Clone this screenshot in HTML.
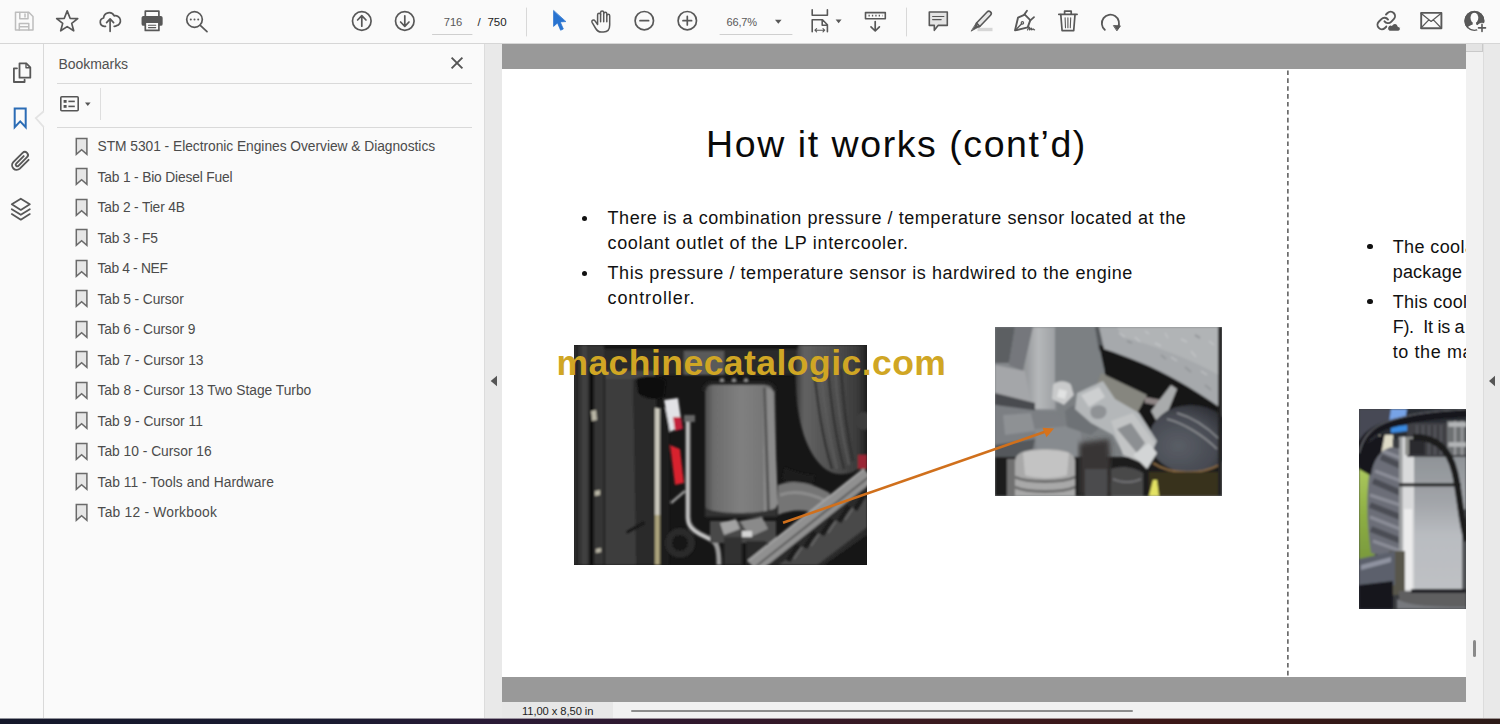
<!DOCTYPE html>
<html lang="en">
<head>
<meta charset="utf-8">
<title>STM 5301 - Electronic Engines Overview &amp; Diagnostics</title>
<style>
html,body{margin:0;padding:0;}
body{width:1500px;height:724px;overflow:hidden;position:relative;background:#fafafa;font-family:"Liberation Sans",sans-serif;color:#4b4b4b;}
.abs{position:absolute;}
#toolbar{left:0;top:0;width:1500px;height:43px;background:#fafafa;border-bottom:1px solid #d6d6d6;}
#leftstrip{left:0;top:44px;width:43px;height:674px;background:#fafafa;border-right:1px solid #d9d9d9;}
#panel{left:44px;top:44px;width:440px;height:674px;background:#fafafa;}
#divider{left:484px;top:44px;width:18px;height:674px;background:#e9e9e9;border-left:1px solid #dcdcdc;box-sizing:border-box;}
#doc{left:502px;top:44px;width:964px;height:658px;background:#999;overflow:hidden;}
#page{left:0;top:25px;width:964px;height:608px;background:#fff;}
#vscroll{left:1466px;top:44px;width:17px;height:674px;background:#f1f1f1;}
#rightstrip{left:1483px;top:44px;width:17px;height:674px;background:#e9e9e9;border-left:1px solid #dcdcdc;box-sizing:border-box;}
#status{left:502px;top:702px;width:964px;height:16px;background:#f1f1f1;}
#taskbar{left:0;top:718px;width:1500px;height:6px;background:linear-gradient(180deg,rgba(245,245,245,.55) 0,rgba(245,245,245,.55) 1px,rgba(0,0,0,0) 1px),linear-gradient(90deg,#14172a 0%,#1a1a30 22%,#2a1a36 33%,#31182c 48%,#3a1a20 62%,#3c1717 78%,#2c1a17 100%);}
.tb{position:absolute;overflow:visible;}
.tbt{font-size:11.5px;line-height:16px;white-space:nowrap;}

.pt{position:absolute;white-space:nowrap;color:#111;font-size:18px;line-height:22px;}
.bul{position:absolute;width:5.600px;height:5.600px;margin:-.3px 0 0 -.3px;border-radius:50%;background:#111;}
.bm{position:absolute;left:97.5px;font-size:13.8px;line-height:16px;white-space:nowrap;color:#4b4b4b;}
.bmi{position:absolute;left:75px;}
</style>
</head>
<body>
<div id="toolbar" class="abs"></div>
<svg class="abs" style="left:0;top:0" width="1500" height="44" viewBox="0 0 1500 44" fill="none" stroke="#585858" stroke-width="1.7" stroke-linecap="round" stroke-linejoin="round">
<!-- save (disabled) -->
<g stroke="#bdbdbd" stroke-width="1.5">
<path d="M15.5 12.3h13.3l4.2 4.2v13.6h-17.5z"/>
<path d="M19.8 12.5v6.3h8.2v-6.3M25 14v3"/>
<path d="M19.3 30v-6.6h9.5v6.6M19.5 26.8h9"/>
</g>
<!-- star -->
<polygon points="67.2,10.9 70.1,18.3 77.7,18.6 71.7,23.4 73.7,30.8 67.2,26.6 60.7,30.8 62.7,23.4 56.7,18.6 64.3,18.3"/>
<!-- cloud upload -->
<path d="M105.5 26.3h-1.3a4.2 4.2 0 0 1-.6-8.3a5.6 5.6 0 0 1 10.600-2.200a4.600 4.600 0 0 1 2.300 9.900q-.8.5-2 .6h-.3"/>
<path d="M110.100 31.300v-12.300M106.600 22.600l3.500-3.700l3.500 3.700"/>
<!-- printer -->
<path d="M145.300 16.500v-5.300h13.600v5.300"/>
<rect x="142.400" y="16.800" width="19.400" height="8.200" rx="1" fill="#585858"/>
<rect x="145.300" y="22.200" width="13.600" height="8.200" fill="#fafafa"/>
<path d="M148.500 25.300h7.200M148.500 27.600h7.200" stroke-width="1.100"/>
<!-- search -->
<circle cx="194.500" cy="19.500" r="7.800"/>
<path d="M200.300 25.300l6.700 6.400"/>
<g fill="#585858" stroke="none"><circle cx="190.800" cy="19.500" r="1"/><circle cx="194.500" cy="19.500" r="1"/><circle cx="198.200" cy="19.500" r="1"/></g>
<!-- page up / down -->
<circle cx="361.800" cy="21" r="9.300"/>
<path d="M361.800 26.200v-10.200M357.600 20l4.200-4.300l4.200 4.300"/>
<circle cx="404.800" cy="21" r="9.300"/>
<path d="M404.800 15.800v10.200M400.600 22l4.200 4.300l4.200-4.300"/>
<!-- separators -->
<path d="M526.500 8v28M906.500 8v28" stroke="#d8d8d8" stroke-width="1"/>
<!-- underlines -->
<path d="M432.500 34.500h39.500M720 34.500h72" stroke="#cfcfcf" stroke-width="1"/>
<!-- select arrow -->
<path d="M553.600 10.800v15.600l3.900-3.500l3.100 7.300l2.700-1.200l-3.100-7.100l5.300-.3z" fill="#2873d0" stroke="#2873d0" stroke-width=".8"/>
<!-- hand -->
<path d="M597.600 24.500v-9.800a1.500 1.500 0 0 1 3 0v-2.200a1.500 1.500 0 0 1 3.100 0v1.200a1.500 1.500 0 0 1 3.100 0v2a1.450 1.450 0 0 1 2.900 0v9.300c0 4.200-2.300 7-6.200 7h-2.200c-2.600 0-4.300-1.300-5.600-3.500l-3.500-5.900c-.6-1.100-.3-2 .5-2.400c.9-.4 1.800-.1 2.500.9l2.400 3.400z" stroke-width="1.500"/>
<path d="M600.600 14.700v7M603.700 13.700v8M606.800 15.700v6" stroke-width="1.500"/>
<!-- zoom out / in -->
<circle cx="644.300" cy="20.700" r="9.200"/>
<path d="M640 20.700h8.600"/>
<circle cx="687.300" cy="20.700" r="9.200"/>
<path d="M683 20.700h8.600M687.300 16.400v8.600"/>
<!-- dropdown arrows -->
<g fill="#585858" stroke="none">
<path d="M775 19.700h6.600l-3.300 4z"/>
<path d="M835.600 19.500h6l-3 3.700z"/>
</g>
<!-- fit width -->
<path d="M812.200 9.800v5.400h15.200v-5.400" stroke-width="1.600"/>
<path d="M812.200 31.800v-12h10.300l4.900 5v7M822.200 20v5.200h5" stroke-width="1.600"/>
<path d="M815 30.200h9.600M816.600 28.600l-1.700 1.600l1.700 1.600M823 28.600l1.700 1.600l-1.700 1.600" stroke-width="1.100"/>
<!-- scroll mode -->
<rect x="865.500" y="12.600" width="19.800" height="6.200" stroke-width="1.600"/>
<path d="M868.500 15.700h14" stroke-width="1.800" stroke-dasharray="1.300 2.100" stroke-linecap="butt"/>
<path d="M875.200 21.600v9.200M871 26.800l4.200 4.200l4.200-4.200"/>
<!-- comment -->
<path d="M929.300 12h18v13.400h-9.200l-3.800 4.900v-4.900h-5z" fill="#e4e4e4" stroke-width="1.600"/>
<path d="M932.600 16.500h11.300M932.600 19.600h8.600" stroke-width="1.100"/>
<!-- highlighter -->
<rect x="977.500" y="27.800" width="15" height="3.400" fill="#d6d6d6" stroke="none"/>
<path d="M988.800 13.600l-10.300 10.800" stroke-width="6.400"/>
<path d="M988.800 13.600l-10.300 10.800" stroke="#e6e6e6" stroke-width="3.200"/>
<path d="M976 22.600l4.200 4.200" stroke-width="1.600" stroke-linecap="butt"/>
<path d="M975.600 24.600l2.600 2.600l-6.800 3.800z" fill="#585858" stroke-width=".8"/>
<!-- sign -->
<path d="M1024.800 14.600l5.500 5.500l-2.600 7.300l-12.700 3l3-12.700z" stroke-width="1.900"/>
<path d="M1015.500 29.900l6.200-6.200" stroke-width="1.400"/>
<circle cx="1022.400" cy="22.900" r="1.200" stroke-width="1.200"/>
<path d="M1024.400 14.400l2.600-3.600M1030.400 20.300l3.600-3.200" stroke-width="1.800"/>
<path d="M1027.500 29.900c.8-1.600 1.600-2.800 2-2.700c.5.200-.5 2.600.1 2.700c.6.100 1.100-2 1.700-1.900c.5.100-.2 1.800.4 1.900c.5.100.9-1.100 1.400-1.100c.4 0 .3 1 1.500 1" stroke-width="1.200"/>
<!-- trash -->
<path d="M1058.800 14.300h18.300M1064.600 14v-2.800h6.600v2.800" stroke-width="1.700"/>
<path d="M1060.800 14.600l1.300 16.100h11.600l1.300-16.100" stroke-width="1.700"/>
<path d="M1065.100 17.800l.4 10M1067.900 17.800v10M1070.700 17.800l-.4 10" stroke-width="1.100"/>
<!-- rotate -->
<path d="M1104.800 29.800a8.600 8.600 0 1 1 13.200-2.400" stroke-width="1.800"/>
<path d="M1113.800 25.600l6.600.3l-3.300 4.600z" fill="#585858" stroke-width="1"/>
<!-- link share -->
<g transform="translate(1375.700 9.900) scale(.88)" stroke-width="2.2">
<path d="M10 13a5 5 0 0 0 7.540.540l3-3a5 5 0 0 0-7.070-7.070l-1.720 1.710"/>
<path d="M14 11a5 5 0 0 0-7.540-.540l-3 3a5 5 0 0 0 7.070 7.070l1.710-1.710"/>
</g>
<path d="M1389.600 31.300h8.200a2.500 2.500 0 0 0 .4-5a3.400 3.400 0 0 0-6.400-1a3.100 3.100 0 0 0-2.200 6z" fill="#585858" stroke="#fafafa" stroke-width="1.200"/>
<!-- mail -->
<rect x="1421.200" y="12.900" width="20.200" height="15.400" stroke-width="1.900"/>
<path d="M1421 13.200l10.100 8.300l10.100-8.300M1421 28l7.800-8.200M1441.200 28l-7.800-8.200" stroke-width="1.200"/>
<!-- user -->
<clipPath id="ucl"><circle cx="1474.400" cy="20.900" r="10"/></clipPath>
<circle cx="1474.400" cy="20.900" r="10" fill="#585858" stroke="none"/>
<g clip-path="url(#ucl)" fill="#fafafa" stroke="none">
<ellipse cx="1474.400" cy="17.800" rx="3.900" ry="5.100"/>
<path d="M1472.700 21.500h3.400v3c1.700.7 4 1.500 5.300 3.300l1.500 4h-17l1.500-4c1.300-1.800 3.600-2.600 5.300-3.300z"/>
</g>
<circle cx="1474.400" cy="20.900" r="9.400" stroke-width="1.300"/>
<circle cx="1482" cy="27.900" r="5.200" fill="#fafafa" stroke="none"/>
<path d="M1478.500 27.900h7M1482 24.400v7" stroke-width="1.600"/>
</svg>
<div class="abs tbt" style="left:433px;top:13.500px;width:40px;text-align:center;color:#585858;font-size:11.200px">716</div>
<div class="abs tbt" style="left:477.500px;top:13.500px;color:#222;word-spacing:3.500px;">/ 750</div>
<div class="abs tbt" style="left:726.500px;top:13.500px;color:#585858;font-size:11px;letter-spacing:-.15px">66,7%</div>

<div id="leftstrip" class="abs"></div>
<div id="panel" class="abs"></div>

<svg class="abs" style="left:0;top:44px" width="44" height="200" viewBox="0 44 44 200" fill="none" stroke="#585858" stroke-width="1.800" stroke-linecap="round" stroke-linejoin="round">
<!-- pages -->
<path d="M19.500 63.300h6.800l4 4v10.400h-10.800z"/>
<path d="M26 63.500v4.200h4.200" stroke-width="1.400"/>
<path d="M17 68.300h-3.100v13.700h10.700v-2.300"/>
<!-- bookmark active -->
<path d="M14.700 108.400h11v18.800l-5.500-5.800l-5.500 5.800z" stroke="#2b6cb5" stroke-width="2" stroke-linejoin="miter"/>
</svg>
<svg class="abs" style="left:30px;top:106px" width="16" height="26" viewBox="30 106 16 26"><path d="M44.500 110.500l-8.600 7.700l8.600 9.500z" fill="#fafafa" stroke="none"/><path d="M43.800 111.200l-8 6.900l8 9" fill="none" stroke="#e3e3e3" stroke-width="1.800"/></svg>
<svg class="abs" style="left:0;top:44px" width="44" height="200" viewBox="0 44 44 200" fill="none" stroke="#585858" stroke-width="1.800" stroke-linecap="round" stroke-linejoin="round">
<!-- paperclip -->
<path d="M28.600 159.800l-8.800 8.800a4.600 4.600 0 0 1-6.500-6.500l9.300-9.300a3.100 3.100 0 0 1 4.400 4.400l-8.600 8.600a1.500 1.500 0 0 1-2.200-2.200l7.500-7.500" stroke-width="1.900"/>
<!-- layers -->
<path d="M20.800 198.700l9 5.600l-9 5.600l-9-5.600z"/>
<path d="M11.800 209.200l9 5.600l9-5.600M11.800 214.100l9 5.600l9-5.600"/>
</svg>
<div class="abs" style="left:58.500px;top:56.300px;font-size:14px;line-height:16px;color:#505050;letter-spacing:-.05px" id="bmtitle">Bookmarks</div>
<svg class="abs" style="left:450px;top:55.700px" width="14" height="14" viewBox="0 0 14 14"><path d="M1.600 1.600l10.800 10.800M12.400 1.600l-10.800 10.800" stroke="#555" stroke-width="1.900" fill="none"/></svg>
<div class="abs" style="left:57px;top:83px;width:415px;height:1px;background:#d9d9d9"></div>
<div class="abs" style="left:57px;top:127px;width:415px;height:1px;background:#d9d9d9"></div>
<div class="abs" style="left:100px;top:88px;width:1px;height:32px;background:#dedede"></div>
<svg class="abs" style="left:58px;top:94px" width="36" height="20" viewBox="58 94 36 20" fill="none" stroke="#555" stroke-width="1.600">
<rect x="60.800" y="96.800" width="17.400" height="14" rx="1"/>
<g fill="#555" stroke="none"><rect x="63.600" y="100" width="3" height="2.800"/><rect x="63.600" y="105" width="3" height="2.800"/><rect x="68.400" y="100.600" width="6.400" height="1.600"/><rect x="68.400" y="105.600" width="6.400" height="1.600"/>
<path d="M85 102.600h5.600l-2.800 3.300z"/></g>
</svg>
<svg class="bmi" style="top:136.5px" width="14" height="19" viewBox="0 0 14 19"><path d="M1.300 1.500h10.600v15.800l-5.300-4.600l-5.300 4.600z" fill="#e6e6e6" stroke="#6a6a6a" stroke-width="1.500" stroke-linejoin="miter"/></svg>
<div class="bm" style="top:139.0px;letter-spacing:-0.04px">STM 5301 - Electronic Engines Overview &amp; Diagnostics</div>
<svg class="bmi" style="top:167.0px" width="14" height="19" viewBox="0 0 14 19"><path d="M1.300 1.500h10.600v15.800l-5.300-4.600l-5.300 4.600z" fill="#e6e6e6" stroke="#6a6a6a" stroke-width="1.500" stroke-linejoin="miter"/></svg>
<div class="bm" style="top:169.5px;letter-spacing:-0.166px">Tab 1 - Bio Diesel Fuel</div>
<svg class="bmi" style="top:197.5px" width="14" height="19" viewBox="0 0 14 19"><path d="M1.300 1.500h10.600v15.800l-5.300-4.600l-5.300 4.600z" fill="#e6e6e6" stroke="#6a6a6a" stroke-width="1.500" stroke-linejoin="miter"/></svg>
<div class="bm" style="top:200.0px;letter-spacing:-0.162px">Tab 2 - Tier 4B</div>
<svg class="bmi" style="top:228.0px" width="14" height="19" viewBox="0 0 14 19"><path d="M1.300 1.500h10.600v15.800l-5.300-4.600l-5.300 4.600z" fill="#e6e6e6" stroke="#6a6a6a" stroke-width="1.500" stroke-linejoin="miter"/></svg>
<div class="bm" style="top:230.5px;letter-spacing:-0.183px">Tab 3 - F5</div>
<svg class="bmi" style="top:258.5px" width="14" height="19" viewBox="0 0 14 19"><path d="M1.300 1.500h10.600v15.800l-5.300-4.600l-5.300 4.600z" fill="#e6e6e6" stroke="#6a6a6a" stroke-width="1.500" stroke-linejoin="miter"/></svg>
<div class="bm" style="top:261.0px;letter-spacing:-0.328px">Tab 4 - NEF</div>
<svg class="bmi" style="top:289.0px" width="14" height="19" viewBox="0 0 14 19"><path d="M1.300 1.500h10.600v15.800l-5.300-4.600l-5.300 4.600z" fill="#e6e6e6" stroke="#6a6a6a" stroke-width="1.500" stroke-linejoin="miter"/></svg>
<div class="bm" style="top:291.5px;letter-spacing:-0.087px">Tab 5 - Cursor</div>
<svg class="bmi" style="top:319.5px" width="14" height="19" viewBox="0 0 14 19"><path d="M1.300 1.500h10.600v15.800l-5.300-4.600l-5.300 4.600z" fill="#e6e6e6" stroke="#6a6a6a" stroke-width="1.500" stroke-linejoin="miter"/></svg>
<div class="bm" style="top:322.0px;letter-spacing:-0.058px">Tab 6 - Cursor 9</div>
<svg class="bmi" style="top:350.0px" width="14" height="19" viewBox="0 0 14 19"><path d="M1.300 1.500h10.600v15.800l-5.300-4.600l-5.300 4.600z" fill="#e6e6e6" stroke="#6a6a6a" stroke-width="1.500" stroke-linejoin="miter"/></svg>
<div class="bm" style="top:352.5px;letter-spacing:-0.035px">Tab 7 - Cursor 13</div>
<svg class="bmi" style="top:380.5px" width="14" height="19" viewBox="0 0 14 19"><path d="M1.300 1.500h10.600v15.800l-5.300-4.600l-5.300 4.600z" fill="#e6e6e6" stroke="#6a6a6a" stroke-width="1.500" stroke-linejoin="miter"/></svg>
<div class="bm" style="top:383.0px;letter-spacing:-0.024px">Tab 8 - Cursor 13 Two Stage Turbo</div>
<svg class="bmi" style="top:411.0px" width="14" height="19" viewBox="0 0 14 19"><path d="M1.300 1.500h10.600v15.800l-5.300-4.600l-5.300 4.600z" fill="#e6e6e6" stroke="#6a6a6a" stroke-width="1.500" stroke-linejoin="miter"/></svg>
<div class="bm" style="top:413.5px;letter-spacing:-0.016px">Tab 9 - Cursor 11</div>
<svg class="bmi" style="top:441.5px" width="14" height="19" viewBox="0 0 14 19"><path d="M1.300 1.500h10.600v15.800l-5.300-4.600l-5.300 4.600z" fill="#e6e6e6" stroke="#6a6a6a" stroke-width="1.500" stroke-linejoin="miter"/></svg>
<div class="bm" style="top:444.0px;letter-spacing:-0.004px">Tab 10 - Cursor 16</div>
<svg class="bmi" style="top:472.0px" width="14" height="19" viewBox="0 0 14 19"><path d="M1.300 1.500h10.600v15.800l-5.300-4.600l-5.300 4.600z" fill="#e6e6e6" stroke="#6a6a6a" stroke-width="1.500" stroke-linejoin="miter"/></svg>
<div class="bm" style="top:474.5px;letter-spacing:0.047px">Tab 11 - Tools and Hardware</div>
<svg class="bmi" style="top:502.5px" width="14" height="19" viewBox="0 0 14 19"><path d="M1.300 1.500h10.600v15.800l-5.300-4.600l-5.300 4.600z" fill="#e6e6e6" stroke="#6a6a6a" stroke-width="1.500" stroke-linejoin="miter"/></svg>
<div class="bm" style="top:505.0px;letter-spacing:0.238px">Tab 12 - Workbook</div>
<div id="divider" class="abs"></div>
<svg class="abs" style="left:488px;top:374px" width="12" height="14" viewBox="0 0 12 14"><path d="M2.700 7l6.300-5.200v10.400z" fill="#555"/></svg>
<div id="doc" class="abs">
  <div id="page" class="abs"></div>
<div class="pt" id="ttl" style="left:204.1px;top:78.0px;font-size:37.500px;line-height:44px;letter-spacing:1.560px;color:#0a0a0a">How it works (cont’d)</div>
<div class="pt" style="left:105.5px;top:163.0px;letter-spacing:0.560px">There is a combination pressure / temperature sensor located at the</div>
<div class="pt" style="left:105.5px;top:187.6px;letter-spacing:0.660px">coolant outlet of the LP intercooler.</div>
<div class="pt" style="left:105.5px;top:218.0px;letter-spacing:0.560px">This pressure / temperature sensor is hardwired to the engine</div>
<div class="pt" style="left:105.5px;top:242.7px;letter-spacing:0.900px">controller.</div>
<div class="bul" style="left:79.8px;top:172.2px"></div>
<div class="bul" style="left:79.8px;top:227.2px"></div>
<div class="pt" style="left:890.7px;top:192.4px;letter-spacing:0.4px">The coolant</div>
<div class="pt" style="left:890.7px;top:216.7px;letter-spacing:0.2px">package</div>
<div class="pt" style="left:890.7px;top:246.5px;letter-spacing:0.3px">This coolant</div>
<div class="pt" style="left:890.7px;top:271.9px;letter-spacing:-0.28px">F).&nbsp; It is a</div>
<div class="pt" style="left:890.7px;top:296.8px;letter-spacing:0.6px">to the main</div>
<div class="bul" style="left:865.4px;top:200.0px"></div>
<div class="bul" style="left:865.4px;top:254.8px"></div>
<svg class="abs" style="left:784px;top:25px" width="4" height="608"><path d="M1.900 1.400V608" stroke="#3c3c3c" stroke-width="1.300" stroke-dasharray="4.600 3.300" fill="none"/></svg>
<svg class="abs" style="left:72px;top:301px" width="293" height="220" viewBox="0 0 293 220">
<defs>
<filter id="b1" x="-5%" y="-5%" width="110%" height="110%"><feGaussianBlur stdDeviation="1.100"/></filter>
<filter id="b2" x="-5%" y="-5%" width="110%" height="110%"><feGaussianBlur stdDeviation="2.500"/></filter>
<linearGradient id="cool" x1="0" x2="1"><stop offset="0" stop-color="#4a4a4a"/><stop offset=".12" stop-color="#6c6c6c"/><stop offset=".5" stop-color="#808080"/><stop offset=".85" stop-color="#757575"/><stop offset="1" stop-color="#6a6a6a"/></linearGradient>
<linearGradient id="duct" x1="0" x2="1"><stop offset="0" stop-color="#3a3a3a"/><stop offset=".12" stop-color="#626262"/><stop offset=".5" stop-color="#505050"/><stop offset=".85" stop-color="#3c3c3c"/><stop offset="1" stop-color="#222"/></linearGradient>
<clipPath id="c1"><rect width="293" height="220"/></clipPath>
</defs>
<rect width="293" height="220" fill="#161616"/>
<g clip-path="url(#c1)">
<g filter="url(#b1)">
<!-- top band behind watermark -->
<path d="M30 4h263v26h-263z" fill="#2a2a2a"/>
<path d="M110 6h40v24h-40z" fill="#5a5a5a"/>
<!-- left strips -->
<rect x="0" y="0" width="30" height="220" fill="#343434"/>
<rect x="2" y="0" width="2" height="220" fill="#1c1c1c"/>
<rect x="15" y="20" width="5" height="200" fill="#0e0e0e"/>
<rect x="8" y="0" width="5" height="220" fill="#3f3f3f"/>
<path d="M17 66l5-1l1 10l-5 1zM21 146l5-1v5l-5 1zM22 204l5-1v4l-5 1z" fill="#b9b6a6"/>
<!-- textured panel -->
<path d="M31 30h28l4 190h-32z" fill="#3d3d3d"/>
<path d="M59 30h22l3 60l-3 130h-19z" fill="#2b2b2b"/>
<path d="M31 26h50v8h-50z" fill="#474747"/>
<path d="M52 186l18-10l1 3l-18 10z" fill="#151515"/>
<path d="M62 34c8-4 24-4 30 2l-2 16c-8 4-20 2-26-4z" fill="#101010"/>
<!-- rod -->
<rect x="81" y="63" width="5" height="157" fill="#c9c7bc"/>
<rect x="81" y="170" width="5" height="50" fill="#aaa27c"/>
<rect x="87" y="63" width="8" height="157" fill="#1a1a1a"/>
<!-- white + red bits -->
<path d="M90 55l14-2l4 28l-12 6z" fill="#e2e2e6"/>
<path d="M99 72l8 0l2 12l-8 2z" fill="#c2203a"/>
<path d="M96 100l10 4l4 34l-9 2z" fill="#d8222f"/>
<!-- pulley -->
<circle cx="106" cy="198" r="15" fill="#2a2a2a"/><circle cx="106" cy="198" r="8" fill="#171717"/>
<path d="M97 158l14-12" stroke="#9a9a9a" stroke-width="2.500"/>
<!-- silver pipe -->
<path d="M114 72v100c0 9 5 13 12 17l12 6c5 3 7 9 7 25" fill="none" stroke="#9a9a9a" stroke-width="5"/>
<path d="M113.500 72v100c0 9 5 13 12 17l12 6" fill="none" stroke="#dadada" stroke-width="1.600"/>
<rect x="110" y="70" width="11" height="7" fill="#666"/>
<!-- cooler -->
<path d="M131 46c0-4 3-7 7-7h52c6 0 10 3 11 8l2 112c0 6-3 11-9 11h-56c-5 0-7-4-7-9z" fill="url(#cool)"/>
<path d="M189 42l10 3l5 114l-7 12l-7-2z" fill="#8b8b8b"/>
<path d="M189 42l3 1l4 124l-3 3z" fill="#555"/>
<path d="M130 46c0-5 3-8 8-8h52c6 0 10 3 11 8" fill="none" stroke="#222" stroke-width="4"/>
<path d="M146 35h4M158 35h4M170 35h4" stroke="#999" stroke-width="3"/>
<path d="M131 162c6 8 62 8 72 0v10h-72z" fill="#333"/>
<!-- duct -->
<path d="M224 0h69v116c-8 10-20 16-34 12c-18-6-32-34-36-70c-2-24-2-40 1-58z" fill="url(#duct)"/>
<path d="M240 26c4 34 8 66 18 98M254 24c3 36 8 70 16 100M267 24c2 34 6 64 12 92" fill="none" stroke="#2c2c2c" stroke-width="2"/>
<path d="M247 26c3 34 8 66 16 98M261 24c2 34 7 66 14 96" fill="none" stroke="#606060" stroke-width="1.500"/>
<circle cx="290" cy="76" r="9" fill="#3c3c3c"/>
<!-- bellows + elbow -->
<path d="M211 122c8 4 20 8 30 8l-3 14c-12-1-22-5-30-10z" fill="#1c1c1c"/>
<path d="M204 140c14-6 32-3 52 8l-8 22c-16-6-30-6-44 0z" fill="#747474"/>
<path d="M206 150c14-5 30-2 46 6" fill="none" stroke="#8e8e8e" stroke-width="3"/>
<!-- lower fittings -->
<path d="M136 176h66v22h-66z" fill="#4a4a4a"/>
<path d="M146 178l16-4l4 10l-16 6z" fill="#a2a2a2"/>
<path d="M166 176l22-4l6 12l-18 8z" fill="#8a8a8a"/>
<path d="M168 186h10v6h-10z" fill="#d4d4d4"/>
<path d="M150 192h18v28h-18z" fill="#333"/>
<path d="M172 196h20v24h-20z" fill="#2a2a2a"/>
<!-- lower right ribs + rail -->
<path d="M176 220l117-94v94z" fill="#2c2c2c"/>
<path d="M205 220l88-68v30l-50 38z" fill="#4a4a4a"/>
<path d="M214 216l10-16M231 203l10-16M248 190l10-16M265 177l10-16M281 165l10-16" stroke="#1a1a1a" stroke-width="5"/>
<path d="M220 214l8-12M237 201l8-12M254 188l8-12M271 175l8-12" stroke="#6a6a6a" stroke-width="1.500"/>
<path d="M250 220l43-30v30z" fill="#121212"/>
<path d="M179 222l116-92" stroke="#909090" stroke-width="15" fill="none"/>
<path d="M180 223l116-92" stroke="#5a5a5a" stroke-width="2" fill="none"/>
<path d="M174 216l116-92" stroke="#a6a6a6" stroke-width="2" fill="none"/>
<path d="M284 110h9v14h-9z" fill="#9a2836"/>
</g>
</g>
</svg>
<svg class="abs" style="left:493px;top:283px" width="227" height="169" viewBox="0 0 227 169">
<defs>
<linearGradient id="g2a" x1="0" y1="0" x2="1" y2="1"><stop offset="0" stop-color="#6e7275"/><stop offset=".5" stop-color="#8f9396"/><stop offset="1" stop-color="#a9acae"/></linearGradient>
<linearGradient id="g2b" x1="0" y1="0" x2="0" y2="1"><stop offset="0" stop-color="#85888b"/><stop offset="1" stop-color="#55585b"/></linearGradient>
<linearGradient id="g2l" x1="0" x2="1"><stop offset="0" stop-color="#8f9295"/><stop offset=".45" stop-color="#b6b8ba"/><stop offset="1" stop-color="#9b9ea1"/></linearGradient>
<radialGradient id="g2c" cx=".35" cy=".6" r=".75"><stop offset="0" stop-color="#5a5e66"/><stop offset=".6" stop-color="#474a52"/><stop offset="1" stop-color="#24252a"/></radialGradient>
<clipPath id="c2"><rect width="227" height="169"/></clipPath>
</defs>
<rect width="227" height="169" fill="#7b7f82"/>
<g clip-path="url(#c2)"><g filter="url(#b1)">
<!-- top-left block -->
<path d="M0 0h62v84h-62z" fill="#85888c"/>
<path d="M0 0h20l-6 36h-14z" fill="#5c5e62"/>
<path d="M20 0h18l-10 44l-14-6z" fill="#74777b"/>
<path d="M38 0h24l-2 82h-26l-6-38z" fill="url(#g2l)"/>
<path d="M0 38l30 6l6 32l-36-8z" fill="#a4a6a9"/>
<path d="M0 66l40 10v10l-40-8z" fill="#4a4c4f"/>
<!-- flat centre block -->
<path d="M60 0h46l10 24l-8 22l-14 16l-34 -2z" fill="#7b8083"/>
<path d="M100 0h16l-2 20l-10 4z" fill="#55585b"/>
<!-- mid-left shadowed area -->
<path d="M0 78l60 8l30 22l-6 22l-84 2z" fill="#7c7f83"/>
<path d="M8 88l28-2l4 18l-30 4z" fill="#8e9194"/>
<path d="M40 102l44-4l6 30l-48 4z" fill="#878b8f"/>
<path d="M0 118l40-6l-4 20l-36 4z" fill="#55585c"/>
<!-- bottom dark -->
<path d="M0 130h227v39h-227z" fill="#1a1a1b"/>
<path d="M84 116l30-4l4 57h-34z" fill="#383634" filter="url(#b2)"/>
<!-- gap under shroud -->
<path d="M104 18c34 8 70 26 123 62v30l-70 22l-42-62z" fill="#171717"/>
<!-- plate behind sensor -->
<path d="M106 46l46 22l-14 26l-42-20z" fill="#86867f"/>
<path d="M150 70l22 4l0 6l-22-4z" fill="#8d8484"/>
<path d="M156 84l20-26l6 4l-16 40z" fill="#a9abac"/>
<!-- shroud -->
<path d="M104 0h123v82c-14-10-30-20-44-28c-24-14-50-24-74-32z" fill="#a6a9ac"/>
<path d="M122 0h105v50c-30-18-70-32-100-40z" fill="#b1b4b6"/>
<path d="M124 6l6 4M140 10l5 5M160 16l6 3M176 30l6 4M196 24l5 6M206 44l6 4M150 4l4 3M186 12l6 3M214 14l5 4M170 6l3 5" stroke="#c6c8ca" stroke-width="1.400" opacity=".8"/>
<path d="M132 14l5 2M166 28l5 4M190 40l6 5M210 58l6 5M200 8l5 3" stroke="#8e9194" stroke-width="1.600"/>
<!-- dome -->
<ellipse cx="196" cy="112" rx="42" ry="34" fill="url(#g2c)"/>
<path d="M172 92c16 4 36 16 50 30M182 86c14 4 30 14 42 26" fill="none" stroke="#8c8e92" stroke-width="1.500"/>
<path d="M158 136c18 12 48 12 66 2" fill="none" stroke="#8b6b42" stroke-width="2"/>
<path d="M154 145h73v24h-73z" fill="#38331f"/>
<path d="M154 169l4-16l4 0l2 16z" fill="#e3e264"/>
<path d="M223 0h4v169h-4z" fill="#202020"/>
<!-- hoses -->
<path d="M20 134c0-8 10-12 30-12s30 4 30 12v35h-60z" fill="#a9a9a9"/>
<path d="M28 126c6-4 36-4 46 0l-2 22c-10 4-32 4-42 0z" fill="#c3c3c3"/>
<path d="M20 150c12 6 48 6 60 0M20 160c12 6 48 6 60 0" fill="none" stroke="#6c6c6c" stroke-width="3"/>
<path d="M12 132l8 0v37h-8z" fill="#707070"/>
<path d="M90 142h22v27h-22z" fill="#4c4c4e"/>
<path d="M116 142c10-4 24-2 32 4v23h-32z" fill="#48484a"/>
<path d="M118 152c8 4 20 4 28 0" stroke="#707072" stroke-width="2" fill="none"/>
<!-- bolt + sensor -->
<path d="M58 58c4-5 14-5 18 0l3 10l-10 10l-12-6z" fill="#c9cacb"/>
<path d="M64 62l8 2l-2 8l-8-2z" fill="#e1e2e2"/>
<path d="M70 84c8-8 20-8 30-2l10 14l-14 12l-24-8z" fill="#6e7276"/>
<path d="M82 66l26-12l12 18l24 14l18 28l-10 22l-24-10l-10-18l-22-12l-16-14z" fill="#b4b7b9"/>
<path d="M86 68l18-8l6 10l-16 10z" fill="#cdcfd0"/>
<path d="M96 82c4-5 12-5 15 0c2 5-2 10-8 10s-9-5-7-10z" fill="#8f9295"/>
<path d="M116 94l22-8l22 30l-12 20l-20-8z" fill="#c2c4c5"/>
<path d="M122 102l14-6l14 20l-8 10z" fill="#8c8f92"/>
<path d="M138 128l16-12l8 10l-10 16z" fill="#d3d5d6"/>
</g></g>
</svg>
<svg class="abs" style="left:857px;top:365px" width="107" height="200" viewBox="0 0 107 200">
<defs>
<linearGradient id="g3a" x1="0" y1="0" x2="0" y2="1"><stop offset="0" stop-color="#8f9397"/><stop offset=".35" stop-color="#a6a9ad"/><stop offset=".6" stop-color="#c2c5c9"/><stop offset="1" stop-color="#c8cacd"/></linearGradient>
<linearGradient id="g3g" x1="0" y1="0" x2="0" y2="1"><stop offset="0" stop-color="#b4cf66"/><stop offset=".5" stop-color="#8fb044"/><stop offset="1" stop-color="#76963c"/></linearGradient>
<pattern id="fin" width="4" height="3" patternUnits="userSpaceOnUse"><rect width="4" height="3" fill="none"/><rect y="2" width="4" height="1" fill="#8e9296" opacity=".55"/></pattern>
<clipPath id="c3"><rect width="107" height="200"/></clipPath>
</defs>
<rect width="107" height="200" fill="#3a3c40"/>
<g clip-path="url(#c3)"><g filter="url(#b1)">
<rect x="0" y="0" width="107" height="30" fill="#2b2e35"/>
<path d="M0 0h44v10l-24 10l-20 18z" fill="#474a55"/>
<path d="M32 0h16l-2 12l-16 2z" fill="#77a3e6"/>
<path d="M32 18l16-2v6l-16 2z" fill="#3b8be2"/>
<!-- sky gap, grass -->
<path d="M20 26h14v20h-14z" fill="#dedac6"/>
<rect x="0" y="48" width="16" height="110" fill="url(#g3g)"/>
<!-- inner fender black -->
<path d="M0 38l26-14l-4 22l-8 22l-14-8z" fill="#14151a"/>
<!-- tire -->
<path d="M12 66c2-14 8-24 20-28l12 2l4 10v96l-12 4l-24-6c-4-26-5-52-2-78z" fill="#6c6e78"/>
<path d="M22 48l22 10M14 72l28 12M11 96l30 12M12 120l30 12" stroke="#4b4d55" stroke-width="6"/>
<path d="M24 42l20 8M16 62l26 10M11 86l30 10M11 108l30 12M14 132l28 10" stroke="#8c8e98" stroke-width="3"/>
<!-- radiator -->
<rect x="54" y="46" width="53" height="134" fill="url(#g3a)"/>
<rect x="54" y="46" width="53" height="134" fill="url(#fin)"/>
<rect x="43" y="28" width="12" height="154" fill="#d9dadb"/>
<rect x="40" y="28" width="3.500" height="154" fill="#9a9c9e"/>
<rect x="45" y="100" width="8" height="80" fill="#ececec"/>
<rect x="103" y="100" width="4" height="82" fill="#55575a"/>
<!-- top-right machinery -->
<path d="M48 14h59v34h-59z" fill="#3f4145"/>
<path d="M58 16v30M64 16v30M70 16v30M76 16v30M82 16v30" stroke="#5d5f63" stroke-width="1.500"/>
<path d="M88 12h19v34h-19z" fill="#6d6f72"/>
<path d="M90 14h17v3h-17zM90 34h17v3h-17zM96 12v34M103 12v34" stroke="#b4b6b8" stroke-width="1.300" fill="#b4b6b8"/>
<path d="M46 28h10v18h-10z" fill="#8e8f8c"/>
<path d="M50 30h16v16h-16z" fill="#2a2b2e"/>
<rect x="40" y="74" width="62" height="3.500" fill="#2a2a2c"/>
<!-- fender arch + hose -->
<path d="M-2 56c2-22 8-32 30-40c26-8 50-10 80-12" fill="none" stroke="#15161a" stroke-width="8"/>
<path d="M0 44c4-16 12-26 30-32c24-8 48-10 77-12" fill="none" stroke="#6a6c72" stroke-width="1.200"/>
<path d="M54 28c22 0 36 10 42 36c5 22 6 48 12 68" fill="none" stroke="#1b1b1e" stroke-width="6.500"/>
<!-- weight block + bottom -->
<path d="M30 142h16v44h-16z" fill="#59564c"/>
<path d="M0 150l36-8v34l-36 4z" fill="#5c606c"/>
<path d="M2 156l30-8v5l-30 8z" fill="#8f93a0"/>
<path d="M0 176l34-4v28h-34z" fill="#17181b"/>
<path d="M40 182h67v18h-67z" fill="#5e5f60"/>
<path d="M52 180h55v4h-55z" fill="#222325"/>
<path d="M38 190c10 6 30 8 69 8v2h-69z" fill="#77797e"/>
</g></g>
</svg>
<svg class="abs" style="left:0;top:0" width="964" height="658" viewBox="502 44 964 658"><path d="M783 522.800L1050 430" stroke="#d0701c" stroke-width="2.600" fill="none"/><path d="M1054 428.500l-11.500 -.800l4 9.600z" fill="#d8731c"/></svg>
<div class="abs" id="wm" style="left:54.4px;top:297.8px;font-size:35.500px;line-height:42px;font-weight:bold;letter-spacing:.460px;color:#d0a624;white-space:nowrap">machinecatalogic.com</div>

</div>
<div id="vscroll" class="abs">
<div class="abs" style="left:0;top:0;width:17px;height:7px;background:#e3e3e3;border-bottom:1px solid #c9c9c9;border-right:1px solid #c9c9c9;box-sizing:content-box;width:16px"></div>
<div class="abs" style="left:7px;top:596px;width:3px;height:17px;border-radius:1.500px;background:#8a8a8a"></div>
</div>
<div id="rightstrip" class="abs"></div>
<svg class="abs" style="left:1486px;top:374px" width="12" height="14" viewBox="0 0 12 14"><path d="M3 7l6-5.200v10.400z" fill="#555"/></svg>
<div id="status" class="abs">
<div class="abs" style="left:0;top:0;width:111px;height:16px;background:#e7e7e7"></div>
<div class="abs" id="dims" style="left:20px;top:2px;font-size:11.200px;line-height:14px;color:#1e1e1e;white-space:nowrap;letter-spacing:-.08px">11,00 x 8,50 in</div>
<div class="abs" style="left:129px;top:7.500px;width:502px;height:2.400px;border-radius:1.200px;background:#8c8c8c"></div>
</div>
<div id="taskbar" class="abs"></div>
</body>
</html>
